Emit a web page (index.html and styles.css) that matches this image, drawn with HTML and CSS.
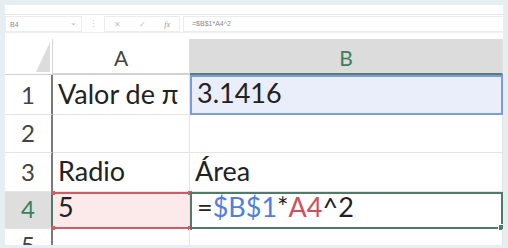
FILE: index.html
```html
<!DOCTYPE html>
<html lang="es">
<head>
  <meta charset="UTF-8" />
  <title>Hoja de cálculo</title>
  <link rel="stylesheet" href="styles.css">
</head>
<body>
  <div class="sheet">
    <div class="ribbon"></div>
    <div class="formula-bar">
      <div class="name-box"><span>B4</span><span class="caret">&#8964;</span></div>
      <div class="dots">&#8942;</div>
      <div class="fx-box"><span>&#10005;</span><span>&#10003;</span><span class="fx">fx</span></div>
      <div class="formula">=$B$1*A4^2</div>
    </div>

    <div class="grid">
      <div class="corner"></div>
      <div class="col-head">A</div>
      <div class="col-head active">B</div>

      <div class="row-head">1</div>
      <div class="cell">Valor de &pi;</div>
      <div class="cell sel-blue">3.1416</div>

      <div class="row-head">2</div>
      <div class="cell"></div>
      <div class="cell"></div>

      <div class="row-head">3</div>
      <div class="cell">Radio</div>
      <div class="cell">Área</div>

      <div class="row-head active">4</div>
      <div class="cell sel-red">5<i class="dot tl"></i><i class="dot bl"></i><i class="dot tr"></i><i class="dot br"></i></div>
      <div class="cell active-cell">=<span class="ref-b">$B$1</span>*<span class="ref-a">A4</span>^2<i class="handle"></i></div>

      <div class="row-head last">5</div>
      <div class="cell last"></div>
      <div class="cell last"></div>
    </div>
  </div>
</body>
</html>
```

FILE: styles.css
```css
body {
  margin: 0;
  padding: 5px;
  background-color: #e5eff1;
  font-family: Lato, "Open Sans", sans-serif;
}
.sheet {
  width: 498px;
  height: 240px;
  background-color: white;
  overflow: hidden;
}
.ribbon {
  height: 9px;
  border-bottom: 1px solid #e6e6e6;
}
.formula-bar {
  display: flex;
  align-items: center;
  height: 16px;
  margin-top: 1px;
  border-bottom: 1px solid #f0f0f0;
  font-size: 7px;
  color: #8a8a8a;
  font-family: "Liberation Sans", sans-serif;
}
.name-box {
  display: flex;
  justify-content: space-between;
  align-items: center;
  width: 67px;
  height: 14px;
  padding: 0 4px 0 4px;
  border: 1px solid #ececec;
}
.caret {
  font-size: 8px;
  color: #b0b0b0;
  margin-top: -4px;
}
.dots {
  width: 22px;
  text-align: center;
  color: #c8c8c8;
  font-size: 9px;
}
.fx-box {
  display: flex;
  justify-content: space-around;
  align-items: center;
  width: 74px;
  height: 14px;
  border: 1px solid #ececec;
  color: #c4c4c4;
  font-size: 8px;
}
.fx-box .fx {
  font-style: italic;
  font-family: "Liberation Serif", serif;
  color: #9a9a9a;
}
.formula {
  flex: 1;
  height: 14px;
  line-height: 14px;
  margin-left: 3px;
  padding-left: 8px;
  border: 1px solid #ececec;
  border-right: none;
}
.grid {
  display: grid;
  grid-template-columns: 48px 137px 313px;
  grid-template-rows: 36px 40px 38px 39px 37px 16px;
  margin-top: 6px;
  font-size: 27px;
  color: #222;
}
.corner {
  position: relative;
  border-right: 1px solid #d8d8d8;
  border-bottom: 1px solid #cfcfcf;
}
.corner::after {
  content: "";
  position: absolute;
  right: 2px;
  bottom: 2px;
  border-style: solid;
  border-width: 0 0 30px 14px;
  border-color: transparent transparent #dcdcdc transparent;
}
.col-head {
  display: flex;
  justify-content: center;
  align-items: flex-end;
  padding-bottom: 3px;
  font-size: 21px;
  color: #444;
  border-bottom: 2px solid #d2d2d2;
  border-right: 1px solid #e0e0e0;
}
.col-head.active {
  background-color: #dcdcdc;
  color: #3f7e58;
  border-bottom: 2px solid #5b7f70;
}
.row-head {
  display: flex;
  justify-content: center;
  align-items: flex-end;
  padding-bottom: 5px;
  font-size: 24px;
  color: #444;
  border-right: 2px solid #7a7a7a;
  border-bottom: 1px solid #e4e4e4;
}
.row-head.active {
  background-color: #dedede;
  color: #3f7e58;
  border-right-color: #4f7a66;
}
.cell {
  position: relative;
  display: flex;
  align-items: flex-end;
  padding: 0 0 4px 5px;
  border-right: 1px solid #e4e4e4;
  border-bottom: 1px solid #e4e4e4;
  white-space: nowrap;
}
.row-head.last,
.cell.last {
  align-items: flex-start;
  padding: 1px 0 0 0;
  border-bottom: none;
  overflow: hidden;
}
.sel-blue {
  background-color: #e9eefa;
  border: 2px solid #7d9ce0;
}
.sel-red {
  background-color: #fce9e9;
  border-top: 2px solid #cc5c66;
  border-bottom: 2px solid #cc5c66;
}
.active-cell {
  border: 2px solid #527a69;
}
.ref-b {
  color: #4d7fe0;
}
.ref-a {
  color: #d0505e;
}
.dot {
  position: absolute;
  width: 4px;
  height: 4px;
  background-color: #cc5c66;
}
.dot.tl { left: -2px; top: -3px; }
.dot.bl { left: -2px; bottom: -3px; }
.dot.tr { right: -3px; top: -3px; }
.dot.br { right: -3px; bottom: -3px; }
.handle {
  position: absolute;
  right: -4px;
  bottom: -4px;
  width: 5px;
  height: 5px;
  background-color: #527a69;
  border: 1px solid white;
}
```
